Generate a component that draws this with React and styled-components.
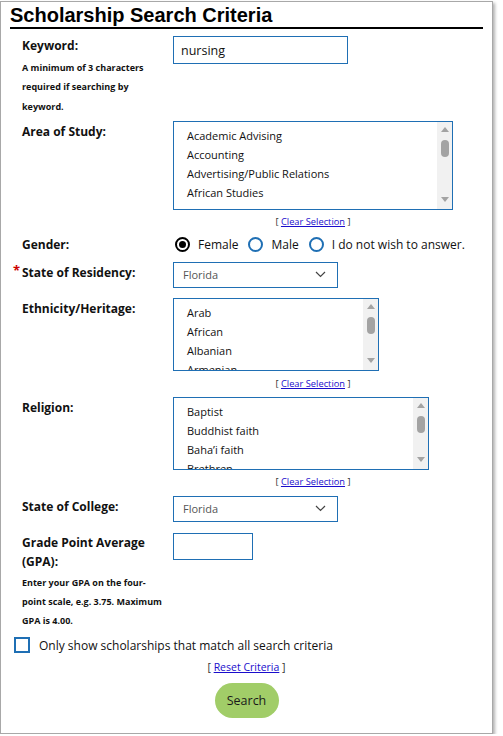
import styled, { createGlobalStyle } from 'styled-components';

const GlobalStyle = createGlobalStyle`
  body {
    margin: 0;
    background: #fff;
    font-family: "Open Sans", "Noto Sans", sans-serif;
    color: #111;
  }
`;

const areas = ['Academic Advising', 'Accounting', 'Advertising/Public Relations', 'African Studies'];
const ethnicities = ['Arab', 'African', 'Albanian', 'Armenian'];
const religions = ['Baptist', 'Buddhist faith', 'Baha\u2019i faith', 'Brethren'];

const Chevron = () => (
  <svg width="11" height="7" viewBox="0 0 11 7">
    <polyline points="1,1 5.5,5.5 10,1" fill="none" stroke="#444" strokeWidth="1.2" />
  </svg>
);

const Listbox = ({ items, width, height }) => (
  <StListbox $w={width} $h={height}>
    <StItems>
      {items.map((item) => (
        <StItem key={item}>{item}</StItem>
      ))}
    </StItems>
    <StTrack>
      <StArrow $up />
      <StThumb />
      <StSpacer />
      <StArrow />
    </StTrack>
  </StListbox>
);

const ClearLink = ({ children, $big }) => (
  <StBracket $big={$big}>
    [ <a href="#">{children}</a> ]
  </StBracket>
);

const App = () => {
  return (
    <>
      <GlobalStyle />
      <StCard>
        <StTitle>Scholarship Search Criteria</StTitle>
        <StForm>
          <StRow $mt={7}>
            <div>
              <StLabel>Keyword:</StLabel>
              <StHelp>A minimum of 3 characters required if searching by keyword.</StHelp>
            </div>
            <div>
              <StInput $w={175} $h={28} defaultValue="nursing" />
            </div>
          </StRow>

          <StRow $mt={5}>
            <StLabel $pt={1}>Area of Study:</StLabel>
            <StControl>
              <Listbox items={areas} width={280} height={89} />
              <ClearLink>Clear Selection</ClearLink>
            </StControl>
          </StRow>

          <StRow $mt={5}>
            <StLabel>Gender:</StLabel>
            <StRadios>
              <StRadioItem>
                <StRadio $checked />
                Female
              </StRadioItem>
              <StRadioItem>
                <StRadio />
                Male
              </StRadioItem>
              <StRadioItem>
                <StRadio />
                I do not wish to answer.
              </StRadioItem>
            </StRadios>
          </StRow>

          <StRow $mt={8}>
            <StLabel $pt={1}>
              <StRequired>*</StRequired>State of Residency:
            </StLabel>
            <div>
              <StSelect>
                Florida
                <Chevron />
              </StSelect>
            </div>
          </StRow>

          <StRow $mt={10}>
            <StLabel $pt={1}>Ethnicity/Heritage:</StLabel>
            <StControl $gap={5}>
              <Listbox items={ethnicities} width={206} height={73} />
              <ClearLink>Clear Selection</ClearLink>
            </StControl>
          </StRow>

          <StRow $mt={5}>
            <StLabel $pt={1}>Religion:</StLabel>
            <StControl>
              <Listbox items={religions} width={256} height={73} />
              <ClearLink>Clear Selection</ClearLink>
            </StControl>
          </StRow>

          <StRow $mt={6}>
            <StLabel $pt={1}>State of College:</StLabel>
            <div>
              <StSelect>
                Florida
                <Chevron />
              </StSelect>
            </div>
          </StRow>

          <StRow $mt={11}>
            <div>
              <StLabel $pt={0}>Grade Point Average (GPA):</StLabel>
              <StHelp $mt={2}>Enter your GPA on the four-point scale, e.g. 3.75. Maximum GPA is 4.00.</StHelp>
            </div>
            <div>
              <StInput $w={80} $h={27} />
            </div>
          </StRow>
        </StForm>

        <StCheckRow>
          <StCheckbox />
          Only show scholarships that match all search criteria
        </StCheckRow>

        <StFooter>
          <ClearLink $big>Reset Criteria</ClearLink>
          <StButton type="button">Search</StButton>
        </StFooter>
      </StCard>
    </>
  );
};
export default App;

const StCard = styled.section`
  width: 491px;
  margin-top: 1px;
  border: 1px solid #a8a8a8;
  box-shadow: 2px 2px 3px rgba(0, 0, 0, 0.3);
  padding-bottom: 15px;
  background: #fff;
`;

const StTitle = styled.h2`
  margin: 0 9px;
  padding-top: 1px;
  font-family: "Liberation Sans", Arial, sans-serif;
  font-size: 20px;
  font-weight: 700;
  line-height: 24px;
  color: #000;
  border-bottom: 2px solid #000;
`;

const StForm = styled.div`
  padding-left: 21px;
`;

const StRow = styled.div`
  display: grid;
  grid-template-columns: 151px 1fr;
  align-items: start;
  margin-top: ${(p) => p.$mt || 0}px;
`;

const StLabel = styled.div`
  font-size: 12px;
  font-weight: 700;
  line-height: 19px;
  padding-top: ${(p) => p.$pt || 0}px;
  padding-right: 8px;
  color: #111;
`;

const StRequired = styled.span`
  display: inline-block;
  width: 9px;
  margin-left: -9px;
  color: #c00;
  font-size: 13px;
  vertical-align: top;
  line-height: 15px;
`;

const StHelp = styled.p`
  margin: ${(p) => p.$mt ?? 3}px 0 0;
  padding-right: 4px;
  font-size: 9px;
  font-weight: 700;
  line-height: 19.3px;
  color: #111;
`;

const StInput = styled.input`
  box-sizing: border-box;
  display: block;
  width: ${(p) => p.$w}px;
  height: ${(p) => p.$h}px;
  border: 1px solid #1f6fb4;
  border-radius: 0;
  padding: 0 7px;
  font-family: "Open Sans", sans-serif;
  font-size: 12.5px;
  color: #111;
  outline: none;
`;

const StControl = styled.div`
  display: flex;
  flex-direction: column;
  gap: ${(p) => p.$gap || 4}px;
  width: 280px;
`;

const StListbox = styled.div`
  box-sizing: border-box;
  display: flex;
  width: ${(p) => p.$w}px;
  height: ${(p) => p.$h}px;
  border: 1px solid #1f6fb4;
  background: #fff;
`;

const StItems = styled.div`
  flex: 1;
  overflow: hidden;
  padding: 4px 0 0 13px;
`;

const StItem = styled.div`
  font-size: 11px;
  line-height: 19px;
  color: #111;
  white-space: nowrap;
`;

const StTrack = styled.div`
  width: 15px;
  background: #f1f1f1;
  display: flex;
  flex-direction: column;
  align-items: center;
  padding: 5px 0 7px;
`;

const StArrow = styled.div`
  width: 0;
  height: 0;
  border-left: 4px solid transparent;
  border-right: 4px solid transparent;
  ${(p) => (p.$up ? 'border-bottom: 5px solid #a3a3a3;' : 'border-top: 5px solid #a3a3a3;')}
`;

const StThumb = styled.div`
  width: 8px;
  height: 17px;
  margin-top: 8px;
  border-radius: 4px;
  background: #a3a3a3;
`;

const StSpacer = styled.div`
  flex: 1;
`;

const StBracket = styled.div`
  text-align: center;
  font-size: ${(p) => (p.$big ? 10.5 : 9.3)}px;
  line-height: 16px;
  color: #333;

  & a {
    color: #1a0dcc;
    text-decoration: underline;
  }
`;

const StRadios = styled.div`
  display: flex;
  align-items: center;
  gap: 10px;
  margin-left: 2px;
  line-height: 19px;
  font-size: 12px;
  color: #111;
`;

const StRadioItem = styled.label`
  display: flex;
  align-items: center;
  gap: 8px;
  white-space: nowrap;
`;

const StRadio = styled.span`
  box-sizing: border-box;
  width: 15px;
  height: 15px;
  border-radius: 50%;
  border: 2px solid ${(p) => (p.$checked ? '#000' : '#1f6fb4')};
  display: flex;
  align-items: center;
  justify-content: center;

  &::after {
    content: '';
    display: ${(p) => (p.$checked ? 'block' : 'none')};
    width: 7px;
    height: 7px;
    border-radius: 50%;
    background: #000;
  }
`;

const StSelect = styled.div`
  box-sizing: border-box;
  width: 165px;
  height: 26px;
  border: 1px solid #1f6fb4;
  display: flex;
  align-items: center;
  justify-content: space-between;
  padding: 0 11px 0 9px;
  font-size: 11px;
  color: #555;
`;

const StCheckRow = styled.label`
  display: flex;
  align-items: center;
  gap: 9px;
  margin: 5px 0 0 13px;
  font-size: 12px;
  line-height: 19px;
  color: #111;
`;

const StCheckbox = styled.span`
  box-sizing: border-box;
  width: 16px;
  height: 16px;
  border: 2px solid #1f6fb4;
  background: #fff;
`;

const StFooter = styled.div`
  display: flex;
  flex-direction: column;
  align-items: center;
  gap: 8px;
  margin-top: 4px;
`;

const StButton = styled.button`
  width: 64px;
  height: 35px;
  border: none;
  border-radius: 18px;
  background: #a1cd68;
  font-family: "Open Sans", sans-serif;
  font-size: 12.5px;
  color: #1a1a1a;
  cursor: pointer;
`;
